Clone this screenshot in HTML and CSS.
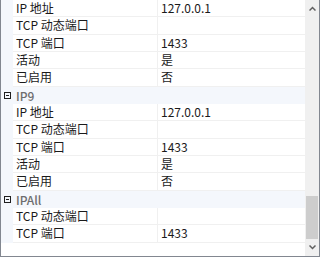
FILE: index.html
```html
<!DOCTYPE html>
<html lang="zh-CN">
<head>
    <meta charset="UTF-8">
    <title>属性</title>
    <link rel="stylesheet" href="styles.css">
</head>
<body>
    <!-- Property grid -->
    <div class="grid-frame">
        <div class="grid-rows">
            <div class="row"><div class="margin"></div><div class="name">IP 地址</div><div class="value">127.0.0.1</div></div>
            <div class="row"><div class="margin"></div><div class="name">TCP 动态端口</div><div class="value"></div></div>
            <div class="row"><div class="margin"></div><div class="name">TCP 端口</div><div class="value">1433</div></div>
            <div class="row"><div class="margin"></div><div class="name">活动</div><div class="value">是</div></div>
            <div class="row"><div class="margin"></div><div class="name">已启用</div><div class="value">否</div></div>

            <div class="row category"><div class="margin"><span class="toggle"></span></div><div class="cat-label">IP9</div></div>
            <div class="row"><div class="margin"></div><div class="name">IP 地址</div><div class="value">127.0.0.1</div></div>
            <div class="row"><div class="margin"></div><div class="name">TCP 动态端口</div><div class="value"></div></div>
            <div class="row"><div class="margin"></div><div class="name">TCP 端口</div><div class="value">1433</div></div>
            <div class="row"><div class="margin"></div><div class="name">活动</div><div class="value">是</div></div>
            <div class="row"><div class="margin"></div><div class="name">已启用</div><div class="value">否</div></div>

            <div class="row category"><div class="margin"><span class="toggle"></span></div><div class="cat-label">IPAll</div></div>
            <div class="row"><div class="margin"></div><div class="name">TCP 动态端口</div><div class="value"></div></div>
            <div class="row"><div class="margin"></div><div class="name">TCP 端口</div><div class="value">1433</div></div>
        </div>

        <!-- Vertical scrollbar -->
        <div class="scrollbar">
            <div class="arrow">
                <svg width="7" height="5" viewBox="0 0 7 5"><path d="M0.5 4.5 L3.5 1.5 L6.5 4.5" fill="none" stroke="#606060" stroke-width="1.5"/></svg>
            </div>
            <div class="track">
                <div class="thumb"></div>
            </div>
            <div class="arrow">
                <svg width="7" height="5" viewBox="0 0 7 5"><path d="M0.5 0.5 L3.5 3.5 L6.5 0.5" fill="none" stroke="#606060" stroke-width="1.5"/></svg>
            </div>
        </div>
    </div>
</body>
</html>
```

FILE: styles.css
```css
body {
    margin: 0;
    padding: 0;
    background: #ffffff;
    font-family: "Noto Sans CJK SC", "Liberation Sans", sans-serif;
    font-size: 12px;
    color: #1a1a1a;
}
.grid-frame {
    display: flex;
    width: 320px;
    height: 257px;
    box-sizing: border-box;
    border-left: 1px solid #828790;
    border-right: 1px solid #828790;
    border-bottom: 1px solid #828790;
    background: #ffffff;
    overflow: hidden;
}
.grid-rows {
    flex: 1;
    display: flex;
    flex-direction: column;
}
.row {
    display: flex;
    height: 17.33px;
    flex-shrink: 0;
}
.margin {
    width: 12px;
    flex-shrink: 0;
    background: #f4f7fc; /* line colour */
    display: flex;
    align-items: center;
    justify-content: center;
}
.name {
    width: 144px;
    flex-shrink: 0;
    padding-left: 3px;
    box-sizing: border-box;
    border-bottom: 1px solid #f0f0f0;
    line-height: 16px;
    white-space: nowrap;
}
.value {
    flex: 1;
    padding-left: 3px;
    border-left: 1px solid #f0f0f0;
    border-bottom: 1px solid #f0f0f0;
    line-height: 16px;
    white-space: nowrap;
}
.row.category {
    background: #f4f7fc;
}
.cat-label {
    padding-left: 3px;
    line-height: 17px;
    font-weight: 500;
    color: #6d6d6d;
}
.toggle {
    width: 7px;
    height: 7px;
    box-sizing: border-box;
    border: 1px solid #1e1e1e;
    position: relative;
    margin-left: 1px;
}
.toggle::after {
    content: "";
    position: absolute;
    left: 1px;
    top: 2px;
    width: 3px;
    height: 1px;
    background: #1e1e1e;
}
.scrollbar {
    width: 14px;
    flex-shrink: 0;
    background: #f0f0f0;
    display: flex;
    flex-direction: column;
}
.arrow {
    height: 17px;
    display: flex;
    align-items: center;
    justify-content: center;
}
.track {
    flex: 1;
    display: flex;
    flex-direction: column;
    justify-content: flex-end;
}
.thumb {
    height: 43px;
    margin: 0 1px;
    background: #cdcdcd;
}
```
